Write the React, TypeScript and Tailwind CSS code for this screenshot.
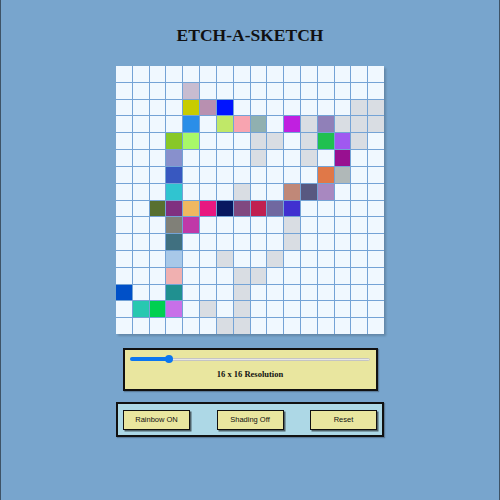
import React from "react";

const W = ".";
const G = "g";

const rows: string[][] = [
  [W, W, W, W, W, W, W, W, W, W, W, W, W, W, W, W],
  [W, W, W, W, "#c8bcd0", W, W, W, W, W, W, W, W, W, W, W],
  [W, W, W, W, "#c8cc00", "#b890b0", "#0014ff", W, W, W, W, W, W, W, G, G],
  [W, W, W, W, "#2a8ee8", W, "#c0e868", "#f8a4b0", "#90b0b0", W, "#c020e0", G, "#9080b8", G, G, G],
  [W, W, W, "#88c828", "#a8f868", W, W, W, G, G, W, G, "#20c050", "#a058f0", G, W],
  [W, W, W, "#8890cc", W, W, W, W, G, W, W, G, W, "#981090", W, W],
  [W, W, W, "#3858c0", W, W, W, W, W, W, W, W, "#e07848", "#b0b8b8", W, W],
  [W, W, W, "#30c4d0", W, W, W, G, W, W, "#c08878", "#585880", "#a888c0", W, W, W],
  [W, W, "#587030", "#803080", "#f0b860", "#e81880", "#081860", "#804880", "#c02050", "#7068a0", "#4030d0", W, W, W, W, W],
  [W, W, W, "#808078", "#c038a8", W, W, W, W, W, G, W, W, W, W, W],
  [W, W, W, "#407080", W, W, W, W, W, W, G, W, W, W, W, W],
  [W, W, W, "#a8c8e8", W, W, G, W, W, G, W, W, W, W, W, W],
  [W, W, W, "#f0b0b0", W, W, W, G, G, W, W, W, W, W, W, W],
  ["#0050c8", W, W, "#209090", W, W, W, G, W, W, W, W, W, W, W, W],
  [W, "#28c8b0", "#00d050", "#c870e8", W, G, W, G, W, W, W, W, W, W, W, W],
  [W, W, W, W, W, W, G, G, W, W, W, W, W, W, W, W],
];

function cellColor(c: string): string {
  if (c === W) return "#f0f8ff";
  if (c === G) return "#d9dde3";
  return c;
}

export default function App() {
  const value = 16;
  const frac = (value - 1) / 99;
  return (
    <div className="min-h-screen border-x border-[#3e5366] bg-[#78a5cd] flex flex-col items-center pt-[25px]">
      <h1 className="h-[20px] leading-[20px] text-[17.5px] font-bold text-[#111] [font-family:'Liberation_Serif',serif]">
        ETCH-A-SKETCH
      </h1>

      <div className="mt-[21px] w-[268px] h-[268px] grid grid-cols-[repeat(16,1fr)] grid-rows-[repeat(16,1fr)] gap-px bg-[#74a3d6] shadow-[2px_2px_2px_rgba(0,0,0,0.18)]">
        {rows.flatMap((row, r) =>
          row.map((c, i) => (
            <div key={`${r}-${i}`} style={{ backgroundColor: cellColor(c) }} />
          ))
        )}
      </div>

      <div className="mt-[14px] w-[255px] border-2 border-[#111] bg-[#e9e69f] flex flex-col items-center pt-[5px] pb-[10px] shadow-[1px_1px_1px_rgba(0,0,0,0.25)]">
        <div className="relative w-[240px] h-[8px] flex items-center">
          <div className="w-full h-[3px] rounded-full bg-[#e8e8e8] border border-[#c4c4c4]" />
          <div
            className="absolute left-0 top-[2px] h-[4px] rounded-full bg-[#0b76f0]"
            style={{ width: `calc((100% - 8px) * ${frac} + 4px)` }}
          />
          <div
            className="absolute top-0 w-[8px] h-[8px] rounded-full bg-[#0b76f0]"
            style={{ left: `calc((100% - 8px) * ${frac})` }}
          />
        </div>
        <div className="mt-[6px] h-[10px] leading-[10px] text-[8.5px] font-bold text-[#111] [font-family:'Liberation_Serif',serif]">
          16 x 16 Resolution
        </div>
      </div>

      <div className="mt-[11px] w-[268px] h-[35px] border-2 border-[#111] bg-[#add8e6] flex items-center justify-between px-[5px] shadow-[1px_1px_1px_rgba(0,0,0,0.25)]">
        {["Rainbow ON", "Shading Off", "Reset"].map((t) => (
          <button
            key={t}
            className="w-[67px] h-[20px] border border-[#111] bg-[#e9e69f] text-[7.5px] text-[#111] [font-family:'Liberation_Sans',Arial,sans-serif] shadow-[1.5px_1.5px_0_rgba(0,0,0,0.55)]"
          >
            {t}
          </button>
        ))}
      </div>
    </div>
  );
}
